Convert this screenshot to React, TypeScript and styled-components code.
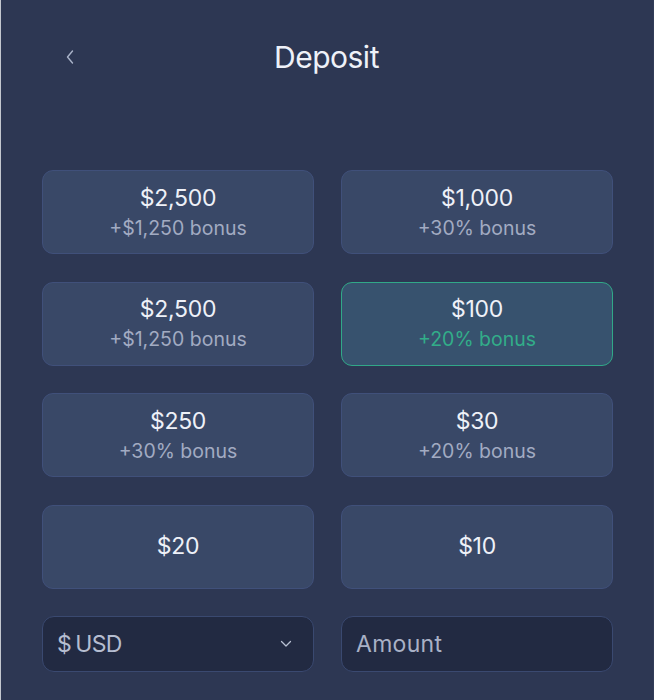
import React from "react";
import styled, { createGlobalStyle } from "styled-components";

const Global = createGlobalStyle`
  html, body { margin: 0; padding: 0; background: #2d3753; }
  body { font-family: Inter, "Noto Sans", sans-serif; }
  * { box-sizing: border-box; }
`;

const Page = styled.div`
  width: 654px;
  height: 700px;
  background: #2d3753;
  border-left: 1px solid #c3c7cf;
  box-shadow: inset -1px 0 0 #313c58;
  display: flex;
  flex-direction: column;
  padding: 0 41px 0 41px;
`;

const Header = styled.header`
  height: 114px;
  display: grid;
  grid-template-columns: 1fr auto 1fr;
  align-items: center;
  margin-bottom: 56px;
`;

const BackButton = styled.button`
  justify-self: start;
  background: none;
  border: none;
  padding: 0 0 0 23px;
  margin: 0;
  display: flex;
  align-items: center;
  cursor: pointer;
  color: #aab3c9;
`;

const Title = styled.h1`
  margin: 0 0 0 -2px;
  font-size: 30px;
  font-weight: 400;
  letter-spacing: -0.5px;
  color: #eef1f8;
`;

const Grid = styled.div`
  display: grid;
  grid-template-columns: 1fr 1fr;
  column-gap: 27px;
  row-gap: 27.5px;
`;

const Option = styled.button<{ $active?: boolean }>`
  height: 84px;
  border-radius: 11px;
  border: ${(p) => (p.$active ? "1.5px solid #31a888" : "1px solid #40507a")};
  background: ${(p) => (p.$active ? "#37526e" : "#394867")};
  display: flex;
  flex-direction: column;
  align-items: center;
  justify-content: center;
  gap: 5px;
  font-family: inherit;
  cursor: pointer;
  padding: 0;
`;

const Amount = styled.span`
  font-size: 23px;
  line-height: 27px;
  color: #eef1f8;
  letter-spacing: -0.3px;
`;

const Bonus = styled.span<{ $active?: boolean }>`
  font-size: 19.5px;
  line-height: 23px;
  color: ${(p) => (p.$active ? "#32ad89" : "#a2abc2")};
  letter-spacing: 0px;
`;

const Controls = styled.div`
  display: grid;
  grid-template-columns: 1fr 1fr;
  column-gap: 27px;
  margin-top: 27px;
`;

const Field = styled.div`
  height: 56px;
  border-radius: 12px;
  border: 1px solid #3a4970;
  background: #222a42;
  display: flex;
  align-items: center;
  justify-content: space-between;
  padding: 0 21px 0 14px;
  color: #b5bdd0;
  font-size: 23px;
  letter-spacing: -0.6px;
`;

const Currency = styled.span`
  display: flex;
  gap: 4px;
`;

const AmountInput = styled.input`
  height: 56px;
  border-radius: 12px;
  border: 1px solid #3a4970;
  background: #222a42;
  padding: 0 14px;
  color: #b5bdd0;
  outline: none;
  width: 100%;
  font-family: inherit;
  font-size: 23px;
  letter-spacing: 0.3px;
  &::placeholder { color: #a9b1c6; }
`;

const options = [
  { amount: "$2,500", bonus: "+$1,250 bonus" },
  { amount: "$1,000", bonus: "+30% bonus" },
  { amount: "$2,500", bonus: "+$1,250 bonus" },
  { amount: "$100", bonus: "+20% bonus", active: true },
  { amount: "$250", bonus: "+30% bonus" },
  { amount: "$30", bonus: "+20% bonus" },
  { amount: "$20" },
  { amount: "$10" },
];

export default function App() {
  return (
    <>
      <Global />
      <Page>
        <Header>
          <BackButton aria-label="Back">
            <svg width="10" height="16" viewBox="0 0 10 16" fill="none">
              <path d="M7.5 2 L2.5 8 L7.5 14" stroke="currentColor" strokeWidth="1.4" strokeLinecap="round" strokeLinejoin="round" />
            </svg>
          </BackButton>
          <Title>Deposit</Title>
          <span />
        </Header>
        <Grid>
          {options.map((o, i) => (
            <Option key={i} $active={o.active}>
              <Amount>{o.amount}</Amount>
              {o.bonus && <Bonus $active={o.active}>{o.bonus}</Bonus>}
            </Option>
          ))}
        </Grid>
        <Controls>
          <Field>
            <Currency>
              <span>$</span>
              <span>USD</span>
            </Currency>
            <svg width="12" height="8" viewBox="0 0 12 8" fill="none">
              <path d="M1.5 1.5 L6 6 L10.5 1.5" stroke="#b9c1d3" strokeWidth="1.3" strokeLinecap="round" strokeLinejoin="round" />
            </svg>
          </Field>
          <AmountInput placeholder="Amount" />
        </Controls>
      </Page>
    </>
  );
}
